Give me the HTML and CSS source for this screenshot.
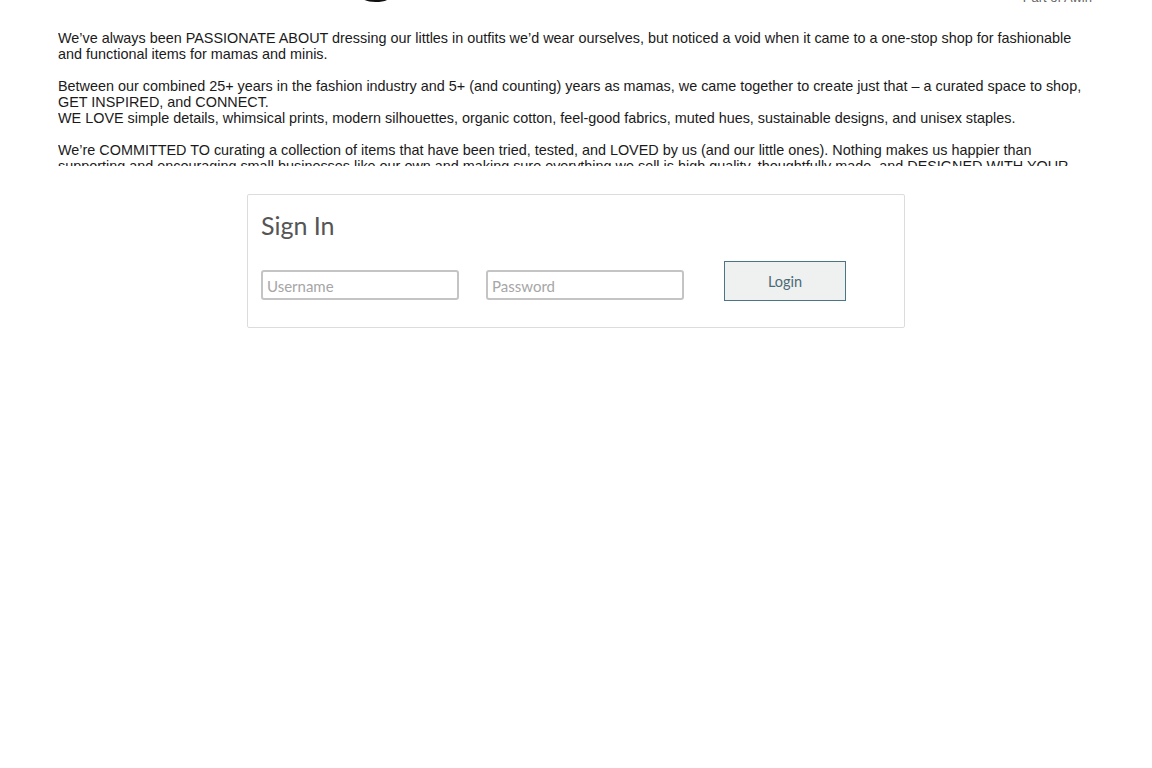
FILE: index.html
```html
<!DOCTYPE html>
<html lang="en">
<head>
<meta charset="utf-8">
<title>Sign In</title>
<link rel="stylesheet" href="styles.css">
</head>
<body>
<header class="top">
  <div class="logo">
    <svg class="logo-tail" width="34" height="8" viewBox="0 0 34 8"><path d="M3 0 C 7 6, 26 6, 31 0" fill="none" stroke="#111" stroke-width="3"/></svg>
  </div>
  <div class="awin">Part of Awin</div>
</header>
<section class="about">
  <div class="about-text">
    We’ve always been PASSIONATE ABOUT dressing our littles in outfits we’d wear ourselves, but noticed a void when it came to a one-stop shop for fashionable and functional items for mamas and minis.<br><br>
    Between our combined 25+ years in the fashion industry and 5+ (and counting) years as mamas, we came together to create just that – a curated space to shop, GET INSPIRED, and CONNECT.<br>
    WE LOVE simple details, whimsical prints, modern silhouettes, organic cotton, feel-good fabrics, muted hues, sustainable designs, and unisex staples.<br><br>
    We’re COMMITTED TO curating a collection of items that have been tried, tested, and LOVED by us (and our little ones). Nothing makes us happier than supporting and encouraging small businesses like our own and making sure everything we sell is high quality, thoughtfully made, and DESIGNED WITH YOUR little ones in mind.
  </div>
</section>
<main class="signin-wrap">
  <form class="signin">
    <h2 class="signin-title">Sign In</h2>
    <div class="signin-row">
      <input class="field" type="text" placeholder="Username">
      <input class="field" type="password" placeholder="Password">
      <button class="login" type="button">Login</button>
    </div>
  </form>
</main>
</body>
</html>
```
FILE: styles.css
```css
html, body {
  margin: 0;
  padding: 0;
  background: #fff;
}
body {
  font-family: "Liberation Sans", Arial, sans-serif;
  color: #1a1a1a;
}
.top {
  height: 6px;
  overflow: hidden;
  display: flex;
  align-items: flex-end;
  justify-content: space-between;
  margin: 0 60px 0 58px;
}
.logo {
  margin-left: 301px;
  height: 8px;
  display: flex;
  align-items: flex-end;
}
.logo-tail {
  display: block;
  margin-bottom: 2px;
}
.awin {
  font-size: 13px;
  line-height: 14px;
  color: #666;
  margin-bottom: 1px;
}
.about {
  margin: 24px 58px 0 58px;
  height: 136px;
  overflow: hidden;
}
.about-text {
  font-size: 14.4px;
  line-height: 16px;
}
.signin-wrap {
  display: flex;
  justify-content: center;
  margin-top: 28px;
}
.signin {
  width: 643px;
  height: 132px;
  border: 1px solid #dcdcdc;
  border-radius: 2px;
  padding: 0 0 0 13px;
  box-sizing: content-box;
  font-family: Lato, "Noto Sans", sans-serif;
}
.signin-title {
  margin: 15px 0 0 0;
  font-size: 25px;
  line-height: 30px;
  font-weight: 400;
  color: #555;
}
.signin-row {
  display: flex;
  align-items: flex-end;
  margin-top: 21px;
}
.field {
  width: 198px;
  height: 30px;
  box-sizing: border-box;
  border: 2px solid #c4c4c4;
  border-radius: 3px;
  padding: 1px 4px 0 4px;
  font-family: Lato, "Noto Sans", sans-serif;
  font-size: 15px;
  color: #333;
  background: #fff;
}
.field::placeholder {
  color: #a6a6a6;
}
.field + .field {
  margin-left: 27px;
}
.login {
  margin-left: 40px;
  margin-bottom: -1px;
  width: 122px;
  height: 40px;
  box-sizing: border-box;
  background: #eff1f1;
  border: 1px solid #4a7585;
  border-radius: 0;
  font-family: Lato, "Noto Sans", sans-serif;
  font-size: 14.5px;
  color: #4c6a76;
}
```
